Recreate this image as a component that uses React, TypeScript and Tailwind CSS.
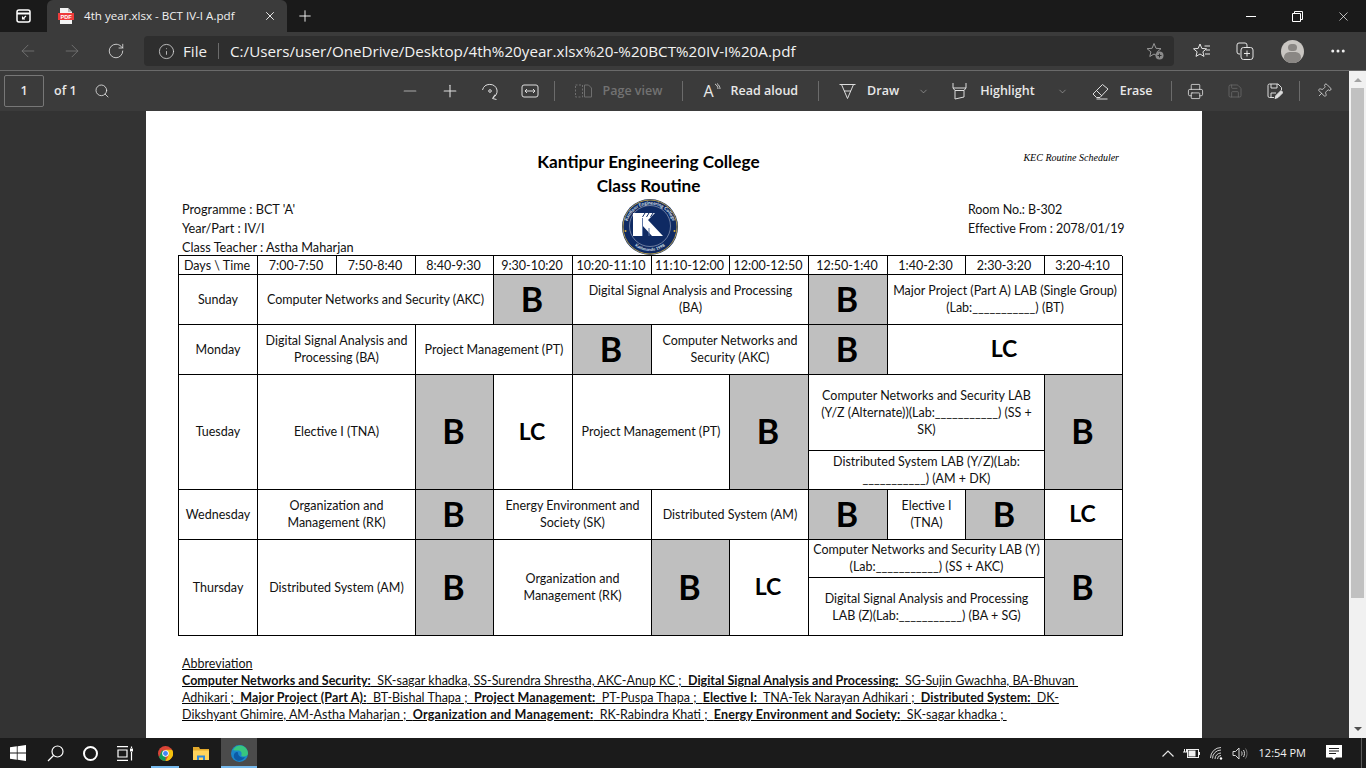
import { ArrowLeft, ArrowRight, ChevronDown, Info, Minus, MoreHorizontal, Pin, Plus, Printer, RotateCw, Save, Search, X } from "lucide-react";
import type { ReactNode } from "react";

const Sep = ({ className = "" }: { className?: string }) => <div className={`h-[20px] w-px bg-[#6b6b6b] ${className}`} />;

const Slot = ({ className = "", children }: { className?: string; children: ReactNode }) => (
  <div className={`flex h-full items-center justify-center ${className}`}>{children}</div>
);

const BCell = ({ className = "" }: { className?: string }) => (
  <div className={`flex items-center justify-center border-r border-b border-black bg-[#bfbfbf] pr-[2px] pb-[2px] text-[34px] leading-none font-bold text-black ${className}`}>
    B
  </div>
);

const LcCell = ({ className = "" }: { className?: string }) => (
  <div className={`flex items-center justify-center border-r border-b border-black pr-[2px] pb-[2px] text-[23px] leading-none font-bold text-black ${className}`}>
    LC
  </div>
);

const Cell = ({ className = "", children }: { className?: string; children: ReactNode }) => (
  <div className={`flex items-center justify-center border-r border-b border-black px-[3px] pb-[1px] text-center leading-[17px] ${className}`}>
    <span>{children}</span>
  </div>
);

const times = ["Days \\ Time", "7:00-7:50", "7:50-8:40", "8:40-9:30", "9:30-10:20", "10:20-11:10", "11:10-12:00", "12:00-12:50", "12:50-1:40", "1:40-2:30", "2:30-3:20", "3:20-4:10"];

const KecLogo = () => (
  <svg width="58" height="58" viewBox="0 0 58 58">
    <circle cx="29" cy="29" r="28" fill="#0f2a63" />
    <circle cx="29" cy="29" r="27" fill="none" stroke="#d9b64a" strokeWidth="0.8" />
    <circle cx="29" cy="28" r="20.500" fill="none" stroke="#c8cfdd" strokeWidth="0.5" />
    <circle cx="4.500" cy="33" r="1" fill="#e2b33c" />
    <circle cx="53.500" cy="33" r="1" fill="#e2b33c" />
    <path id="kecTop" d="M5.500 30 A23.500 23.500 0 0 1 52.500 30" fill="none" />
    <path id="kecBottom" d="M10 44 A24.500 24.500 0 0 0 48 44" fill="none" />
    <text fontSize="4.600" fontWeight="700" fill="#dfe3ec" fontFamily="Lato, sans-serif">
      <textPath href="#kecTop" startOffset="50%" textAnchor="middle">Kantipur Engineering College</textPath>
    </text>
    <text fontSize="4.200" fontWeight="700" fill="#dfe3ec" fontFamily="Lato, sans-serif">
      <textPath href="#kecBottom" startOffset="50%" textAnchor="middle">Kathmandu 1998</textPath>
    </text>
    <path d="M12 15H21V38H12Z" fill="#fff" />
    <path d="M21 15H34L27 22 42 38H31L21 27Z" fill="#fff" />
    <path d="M24 15 21.500 19M28 15 25.500 19M32 15 29.500 19" stroke="#0f2a63" strokeWidth="1" />
    <path d="M21.500 20V38M28 30V38" stroke="#5f78a8" strokeWidth="1" />
  </svg>
);

const Abbreviations = () => (
  <div className="mt-[19px] pl-[4px] text-[12.5px] leading-[17px] whitespace-pre text-[#111] underline decoration-black">
    <div>Abbreviation</div>
    <div>
      <b>Computer Networks and Security:</b>{"  SK-sagar khadka, SS-Surendra Shrestha, AKC-Anup KC ;  "}
      <b>Digital Signal Analysis and Processing:</b>{"  SG-Sujin Gwachha, BA-Bhuvan "}
    </div>
    <div>
      {"Adhikari ;  "}
      <b className="tracking-[0.13px]">Major Project (Part A):</b>{"  BT-Bishal Thapa ;  "}
      <b className="tracking-[0.1px]">Project Management:</b>{"  PT-Puspa Thapa ;  "}
      <b>Elective I:</b>{"  TNA-Tek Narayan Adhikari ;  "}
      <b>Distributed System:</b>{"  DK-"}
    </div>
    <div>
      {"Dikshyant Ghimire, AM-Astha Maharjan ;  "}
      <b className="tracking-[0.2px]">Organization and Management:</b>{"  RK-Rabindra Khati ;  "}
      <b className="tracking-[0.1px]">Energy Environment and Society:</b>{"  SK-sagar khadka ; "}
    </div>
  </div>
);

const Routine = () => (
  <div className="grid grid-cols-[79px_79px_79px_78px_79px_79px_78px_79px_79px_78px_79px_78px] grid-rows-[19px_50px_50px_76px_39px_50px_38px_58px] border-t border-l border-black text-[12.5px] text-[#111]">
    {times.map((t) => (
      <div key={t} className="flex items-center justify-center border-r border-b border-black pt-[2px] pr-[2px] leading-none whitespace-nowrap">
        {t}
      </div>
    ))}

    <Cell>Sunday</Cell>
    <Cell className="col-span-3">Computer Networks and Security (AKC)</Cell>
    <BCell />
    <Cell className="col-span-3">Digital Signal Analysis and Processing (BA)</Cell>
    <BCell />
    <Cell className="col-span-3">Major Project (Part A) LAB (Single Group) (Lab:___________) (BT)</Cell>

    <Cell>Monday</Cell>
    <Cell className="col-span-2">Digital Signal Analysis and Processing (BA)</Cell>
    <Cell className="col-span-2">Project Management (PT)</Cell>
    <BCell />
    <Cell className="col-span-2">Computer Networks and Security (AKC)</Cell>
    <BCell />
    <LcCell className="col-span-3" />

    <Cell className="row-span-2">Tuesday</Cell>
    <Cell className="col-span-2 row-span-2">Elective I (TNA)</Cell>
    <BCell className="row-span-2" />
    <LcCell className="row-span-2" />
    <Cell className="col-span-2 row-span-2">Project Management (PT)</Cell>
    <BCell className="row-span-2" />
    <Cell className="col-span-3 px-[6px] pt-[1px]">Computer Networks and Security LAB (Y/Z (Alternate))(Lab:___________) (SS + SK)</Cell>
    <BCell className="row-span-2" />
    <Cell className="col-span-3 px-[6px] pt-[1px]">Distributed System LAB (Y/Z)(Lab: ___________) (AM + DK)</Cell>

    <Cell>Wednesday</Cell>
    <Cell className="col-span-2 px-[20px]">Organization and Management (RK)</Cell>
    <BCell />
    <Cell className="col-span-2">Energy Environment and Society (SK)</Cell>
    <Cell className="col-span-2">Distributed System (AM)</Cell>
    <BCell />
    <Cell className="px-[8px]">Elective I (TNA)</Cell>
    <BCell />
    <LcCell />

    <Cell className="row-span-2">Thursday</Cell>
    <Cell className="col-span-2 row-span-2">Distributed System (AM)</Cell>
    <BCell className="row-span-2" />
    <Cell className="col-span-2 row-span-2 px-[20px]">Organization and Management (RK)</Cell>
    <BCell className="row-span-2" />
    <LcCell className="row-span-2" />
    <Cell className="col-span-3">Computer Networks and Security LAB (Y) (Lab:___________) (SS + AKC)</Cell>
    <BCell className="row-span-2" />
    <Cell className="col-span-3 px-[10px] pt-[1px]">Digital Signal Analysis and Processing LAB (Z)(Lab:___________) (BA + SG)</Cell>
  </div>
);

const TitleBar = () => (
  <div className="flex h-[32px] bg-[#1a1a1a] text-white">
    <Slot className="w-[47px]">
      <svg width="16" height="16" viewBox="0 0 16 16" fill="none" stroke="#fff" strokeWidth="1.5">
        <rect x="1" y="2" width="13" height="12" rx="2" />
        <path d="M1 5.500h13" strokeWidth="2" />
        <path d="M10 8 6.500 11M6.500 8.500V11H9" strokeWidth="1.100" />
      </svg>
    </Slot>
    <div className="flex w-[240px] items-center rounded-t-[6px] bg-[#3b3b3b] pl-[11px]">
      <svg width="16" height="16" viewBox="0 0 16 16">
        <path d="M2 0h8l4 4v12H2Z" fill="#f4f4f4" />
        <path d="M10 0l4 4h-4Z" fill="#bbb" />
        <rect x="0" y="5" width="16" height="7" fill="#ee3b3b" />
        <text x="8" y="10.600" fontSize="5.600" fontWeight="700" fill="#fff" textAnchor="middle" fontFamily="Liberation Sans, sans-serif">PDF</text>
      </svg>
      <span className="ml-[10px] font-['Open_Sans',sans-serif] text-[11.6px] whitespace-nowrap text-[#f0f0f0]">4th year.xlsx - BCT IV-I A.pdf</span>
      <X className="mr-[10px] ml-auto" size={14} strokeWidth={1.5} />
    </div>
    <Slot className="w-[36px]">
      <Plus size={18} strokeWidth={1.2} />
    </Slot>
    <div className="flex-1" />
    <Slot className="w-[46px]">
      <div className="h-px w-[10px] bg-white" />
    </Slot>
    <Slot className="w-[46px]">
      <svg width="11" height="11" viewBox="0 0 11 11" fill="none" stroke="#fff">
        <path d="M.5 2.500h8v8h-8ZM2.500 2.500v-2h8v8h-2" />
      </svg>
    </Slot>
    <Slot className="w-[46px]">
      <X size={15} strokeWidth={1.1} />
    </Slot>
  </div>
);

const AddressBar = () => (
  <div className="flex h-[38px] items-center bg-[#3b3b3b] text-white">
    <Slot className="ml-[8px] w-[40px]">
      <ArrowLeft size={20} strokeWidth={1} color="#777" />
    </Slot>
    <Slot className="ml-[4px] w-[40px]">
      <ArrowRight size={20} strokeWidth={1} color="#777" />
    </Slot>
    <Slot className="ml-[4px] w-[40px]">
      <RotateCw size={18} strokeWidth={1.1} color="#e4e4e4" />
    </Slot>
    <div className="ml-[8px] flex h-[30px] w-[1030px] items-center rounded-[4px] bg-[#2e2e2e] pr-[10px] pl-[14px] font-['Open_Sans',sans-serif] text-[15.2px]">
      <Info size={17} strokeWidth={1.1} color="#ddd" />
      <span className="ml-[8px] text-[#eee]">File</span>
      <div className="mr-[11px] ml-[11px] h-[16px] w-px bg-[#6b6b6b]" />
      <span className="text-[#f2f2f2]">C:/Users/user/OneDrive/Desktop/4th%20year.xlsx%20-%20BCT%20IV-I%20A.pdf</span>
      <svg className="ml-auto" width="18" height="18" viewBox="0 0 18 18" fill="none" stroke="#999" strokeWidth="1">
        <path d="M8 1.500 10 6.300l5 .4-3.800 3.200 1 4.600L8 12l-4.200 2.500 1.100-4.600L1.100 6.700l5-.4Z" />
        <circle cx="13.500" cy="13.500" r="4" fill="#8a8a8a" stroke="none" />
        <path d="M13.500 11.500v4M11.500 13.500h4" stroke="#2e2e2e" />
      </svg>
    </div>
    <Slot className="ml-[8px] w-[40px]">
      <svg width="18" height="18" viewBox="0 0 18 18" fill="none" stroke="#e6e6e6" strokeWidth="1">
        <path d="M7 2 8.800 6.400l4.700.4-3.600 3 1.100 4.600L7 12l-4 2.400 1.100-4.600-3.600-3 4.700-.4Z" />
        <path d="M11.500 4H17M13 8h4M12 12h5" />
      </svg>
    </Slot>
    <Slot className="ml-[3px] w-[40px]">
      <svg width="18" height="18" viewBox="0 0 18 18" fill="none" stroke="#e6e6e6" strokeWidth="1">
        <path d="M4 12H3a2 2 0 0 1-2-2V3a2 2 0 0 1 2-2h6a2 2 0 0 1 2 2v2" />
        <rect x="5" y="5.500" width="12" height="12" rx="2.500" />
        <path d="M11 8.500v6M8 11.500h6" />
      </svg>
    </Slot>
    <Slot className="ml-[7px] w-[40px]">
      <div className="flex h-[23px] w-[23px] flex-col items-center overflow-hidden rounded-full bg-[#c9c6c2]">
        <div className="mt-[4px] h-[9px] w-[9px] rounded-full bg-[#8a8784]" />
        <div className="mt-[1px] h-[12px] w-[17px] rounded-full bg-[#8a8784]" />
      </div>
    </Slot>
    <Slot className="ml-[6px] w-[40px]">
      <MoreHorizontal size={18} strokeWidth={2} color="#eee" />
    </Slot>
  </div>
);

const PdfToolbar = () => (
  <div className="flex h-[40px] shrink-0 items-center bg-[#3b3b3b] font-['Open_Sans',sans-serif] text-[12.5px] font-semibold text-[#e8e8e8]">
    <div className="ml-[4px] flex h-[32px] w-[40px] items-center justify-center rounded-[2px] border border-[#777]">1</div>
    <span className="ml-[10px]">of 1</span>
    <Search className="ml-[17px]" size={16} strokeWidth={1.2} />

    <div className="ml-[280px] flex h-full items-center text-[#cfcfcf]">
      <Slot className="w-[40px]">
        <Minus size={20} strokeWidth={1.3} color="#aaa" />
      </Slot>
      <Slot className="w-[40px]">
        <Plus size={20} strokeWidth={1.3} color="#ddd" />
      </Slot>
      <Slot className="w-[40px]">
        <svg width="18" height="18" viewBox="0 0 18 18" fill="none" stroke="#ddd" strokeWidth="1">
          <path d="M1.500 8A7.500 7.500 0 0 1 16 8c.5 3-1 6-4 8" />
          <path d="M14 12.500 11.500 16.500l4 1" />
          <circle cx="9" cy="9" r="1.300" />
        </svg>
      </Slot>
      <Slot className="w-[40px]">
        <svg width="18" height="14" viewBox="0 0 18 14" fill="none" stroke="#ddd" strokeWidth="1">
          <rect x="1" y="1" width="16" height="12" rx="2" />
          <path d="M4 7h10M6 5 4 7l2 2M12 5l2 2-2 2" />
        </svg>
      </Slot>
    </div>
    <Sep className="ml-[4px]" />
    <svg className="ml-[20px]" width="17" height="14" viewBox="0 0 17 14" fill="none" stroke="#6e6e6e" strokeWidth="1" strokeDasharray="2 1.500">
      <rect x=".5" y="1" width="7" height="12" />
      <path d="M9.500 1h4l3 3v9h-7Z" strokeDasharray="none" />
    </svg>
    <span className="ml-[11px] text-[#727272]">Page view</span>
    <Sep className="ml-[20px]" />
    <div className="ml-[20px] flex items-start leading-none font-normal">
      <span className="text-[16px]">A</span>
      <svg width="7" height="10" viewBox="0 0 7 10" fill="none" stroke="#ddd" strokeWidth=".9">
        <path d="M1 1c2 1 3 3 3 5M3 .5c2 1.500 3 3.500 3 5.500" />
      </svg>
    </div>
    <span className="ml-[10px]">Read aloud</span>
    <Sep className="ml-[20px]" />
    <svg className="ml-[20px]" width="17" height="17" viewBox="0 0 17 17" fill="none" stroke="#ddd" strokeWidth="1">
      <path d="M.5 1.500h16M2.500 1.500l6 14 6-14M5 8h7" />
    </svg>
    <span className="ml-[11px]">Draw</span>
    <ChevronDown className="ml-[19px]" size={11} strokeWidth={1.2} color="#bbb" />
    <svg className="ml-[23px]" width="15" height="17" viewBox="0 0 15 17" fill="none" stroke="#ddd" strokeWidth="1">
      <path d="M1 0v5l2 2.500h9L14 5V0M1 5h13M3 7.500V16l9-2V7.500" />
    </svg>
    <span className="ml-[13px]">Highlight</span>
    <ChevronDown className="ml-[22px]" size={11} strokeWidth={1.2} color="#bbb" />
    <svg className="ml-[24px]" width="17" height="17" viewBox="0 0 17 17" fill="none" stroke="#ddd" strokeWidth="1">
      <path d="M1 11 10.500 1.500 16 6l-8 8.500H4.500Z" />
      <path d="M4.500 7.500 10 13M4.500 16h11" />
    </svg>
    <span className="ml-[11px]">Erase</span>
    <Sep className="ml-[18px]" />
    <Printer className="ml-[15px]" size={17} strokeWidth={1.1} />
    <Save className="ml-[23px]" size={16} strokeWidth={1.1} color="#6e6e6e" />
    <svg className="ml-[24px]" width="16" height="16" viewBox="0 0 16 16" fill="none" stroke="#ddd" strokeWidth="1">
      <path d="M7 14.500H2.500a1.500 1.500 0 0 1-1.500-1.500V2.500A1.500 1.500 0 0 1 2.500 1H11l3.500 3.500V7" />
      <path d="M4 1v4h6V1M4 14v-4h5" />
      <path d="M8 15.500l1-3 5-5 2 2-5 5Z" fill="#ddd" />
    </svg>
    <Sep className="ml-[16px]" />
    <Pin className="ml-[16px] rotate-45" size={16} strokeWidth={1.1} />
  </div>
);

const ScrollBar = () => (
  <div className="flex w-[17px] shrink-0 flex-col items-center bg-[#f1f1f1]">
    <div className="mt-[7px] h-0 w-0 border-x-[4px] border-b-[4px] border-x-transparent border-b-[#a3a3a3]" />
    <div className="mt-[6px] h-[510px] w-[13px] bg-[#c1c1c1]" />
    <div className="mt-auto mb-[7px] h-0 w-0 border-x-[4px] border-t-[4px] border-x-transparent border-t-[#505050]" />
  </div>
);

const Taskbar = () => (
  <div className="flex h-[30px] shrink-0 items-center bg-[#1b1b1b] text-white">
    <Slot className="w-[35px]">
      <svg width="16" height="16" viewBox="0 0 16 16" fill="#fff">
        <path d="M0 2.300 6.800 1.300V7.600H0ZM7.600 1.200 16 0V7.600H7.600ZM0 8.400H6.800V14.700L0 13.700ZM7.600 8.400H16V16L7.600 14.800Z" />
      </svg>
    </Slot>
    <Slot className="w-[40px]">
      <svg width="17" height="17" viewBox="0 0 17 17" fill="none" stroke="#fff" strokeWidth="1.2">
        <circle cx="10.500" cy="6.500" r="5.500" />
        <path d="M6.500 10.500 1 16" />
      </svg>
    </Slot>
    <Slot className="w-[30px]">
      <div className="h-[15px] w-[15px] rounded-full border-[2px] border-white" />
    </Slot>
    <Slot className="w-[40px]">
      <svg width="16" height="15" viewBox="0 0 16 15" fill="none" stroke="#fff" strokeWidth="1.200">
        <path d="M0 .6h11M1 4h9v7H1ZM0 14.400h11M14.500 .5V2M14.500 6v8.500" />
        <rect x="13" y="2.500" width="3" height="3" fill="#fff" stroke="none" />
      </svg>
    </Slot>
    <div className="relative ml-[2px] flex h-full w-[36px] items-center justify-center">
      <svg width="15" height="15" viewBox="0 0 16 16">
        <circle cx="8" cy="8" r="8" fill="#db4437" />
        <path d="M8 16a8 8 0 0 1-6.900-4L4.500 4 8 11.500Z" fill="#0f9d58" />
        <path d="M8 4h7a8 8 0 0 1-7 12l3.500-6.500Z" fill="#f4c20d" />
        <circle cx="8" cy="8" r="3.500" fill="#fff" />
        <circle cx="8" cy="8" r="2.600" fill="#4285f4" />
      </svg>
      <div className="absolute bottom-0 left-[4px] h-[2px] w-[28px] bg-[#76b9ed]" />
    </div>
    <Slot className="w-[36px]">
      <svg width="16" height="14" viewBox="0 0 16 14">
        <path d="M0 1h6l1 2h9v11H0Z" fill="#e3a92b" />
        <path d="M0 4.500h16V14H0Z" fill="#ffd35c" />
        <path d="M4 14V9.500h8V14h-2v-2.500H6V14Z" fill="#2f88d8" />
      </svg>
    </Slot>
    <div className="relative ml-[2px] flex h-full w-[36px] items-center justify-center bg-[#4b4b4b]">
      <svg width="17" height="17" viewBox="0 0 17 17">
        <circle cx="8.500" cy="8.500" r="8.500" fill="#1b86c9" />
        <path d="M2 5C4 1 8 0 11 .8c3.500 1 6 4 6 7.700 0 2-2 3-4.500 3-2 0-2.500-1-2-2 .5-1.500-.5-4-3.500-4C4.500 5.500 3 5.500 2 5Z" fill="#37c67f" />
        <path d="M7 8c0 3 3 5.500 7 4-1.500 3-5 4.500-8 3.500C3 14 2 11 3.500 8.500 4.800 6.700 7 6.500 7 8Z" fill="#0c5aa6" />
      </svg>
      <div className="absolute bottom-0 left-0 h-[2px] w-full bg-[#76b9ed]" />
    </div>

    <div className="ml-auto flex h-full items-center">
      <Slot className="w-[20px]">
        <svg width="12" height="7" viewBox="0 0 12 7" fill="none" stroke="#e6e6e6" strokeWidth="1.200">
          <path d="M.5 6.500 6 1l5.500 5.500" />
        </svg>
      </Slot>
      <Slot className="ml-[2px] w-[24px]">
        <svg width="17" height="12" viewBox="0 0 17 12" fill="none" stroke="#f0f0f0" strokeWidth="1">
          <rect x="4.500" y="2.500" width="11" height="8" />
          <rect x="5.500" y="3.500" width="7" height="6" fill="#f0f0f0" stroke="none" />
          <path d="M16.500 5v3M0 5h4.500M1.500 2v3M3.500 2v3" />
        </svg>
      </Slot>
      <Slot className="ml-[1px] w-[24px]">
        <svg width="13" height="13" viewBox="0 0 13 13" fill="none" stroke="#d0d0d0" strokeWidth="1">
          <path d="M.5 11A10.500 10.500 0 0 1 11 .5M2.500 11.500A8.500 8.500 0 0 1 11 3M5 12A6 6 0 0 1 11 6M7.500 12A3.500 3.500 0 0 1 11 8.500" />
          <circle cx="11" cy="11.500" r="1.200" fill="#fff" stroke="none" />
        </svg>
      </Slot>
      <Slot className="ml-[2px] w-[18px]">
        <svg width="16" height="13" viewBox="0 0 16 13" fill="none" stroke="#d8d8d8" strokeWidth="1">
          <path d="M1 4.500h2.500L7 1v11L3.500 8.500H1ZM9.500 4.500c.7 1.200.7 2.800 0 4M11.500 3c1.300 2 1.300 5 0 7" />
          <path d="M13.500 1.500c2 3 2 7 0 10" stroke="#777" />
        </svg>
      </Slot>
      <span className="ml-[10px] font-['Open_Sans',sans-serif] text-[11px] whitespace-nowrap text-[#f2f2f2]">12:54 PM</span>
      <Slot className="ml-[16px] w-[24px]">
        <svg width="16" height="16" viewBox="0 0 16 16">
          <path d="M0 0h16v12.500H10l-2 2.500-2-2.500H0Z" fill="#fff" />
          <path d="M3 3.500h10M3 6h10M3 8.500h7" stroke="#1b1b1b" strokeWidth="1" />
        </svg>
      </Slot>
      <div className="ml-[15px] h-full w-px bg-[#5a5a5a]" />
      <div className="w-[4px]" />
    </div>
  </div>
);

const App = () => {
  return (
    <div className="flex h-screen w-[1366px] flex-col overflow-hidden bg-[#333]">
      <TitleBar />
      <AddressBar />
      <div className="flex min-h-0 flex-1 border-t border-[#6a6a6a]">
        <div className="flex min-w-0 flex-1 flex-col">
          <PdfToolbar />
          <div className="min-h-0 flex-1 overflow-hidden bg-[#333] pl-[146px]">
            <div className="h-full w-[1056px] bg-white pt-[39px] pr-[80px] pl-[32px] font-['Lato',sans-serif] text-black">
              <div className="flex items-start">
                <div className="flex-1" />
                <div className="text-center text-[17.2px] leading-[24px] font-bold">
                  <div>Kantipur Engineering College</div>
                  <div>Class Routine</div>
                </div>
                <div className="flex-1 pr-[3px] text-right font-['Liberation_Serif',serif] text-[10px] italic">KEC Routine Scheduler</div>
              </div>
              <div className="grid h-[57px] grid-cols-[1fr_58px_1fr] items-start text-[12.7px] leading-[19px] text-[#111]">
                <div className="pt-[2px] pl-[4px]">
                  <div>Programme : BCT &#39;A&#39;</div>
                  <div>Year/Part : IV/I</div>
                  <div>Class Teacher : Astha Maharjan</div>
                </div>
                <KecLogo />
                <div className="-mr-[2px] w-[156px] justify-self-end pt-[2px] text-[12.5px] tracking-[-0.08px] whitespace-nowrap">
                  <div>Room No.: B-302</div>
                  <div>Effective From : 2078/01/19</div>
                </div>
              </div>
              <Routine />
              <Abbreviations />
            </div>
          </div>
        </div>
        <ScrollBar />
      </div>
      <Taskbar />
    </div>
  );
};

export default App;
